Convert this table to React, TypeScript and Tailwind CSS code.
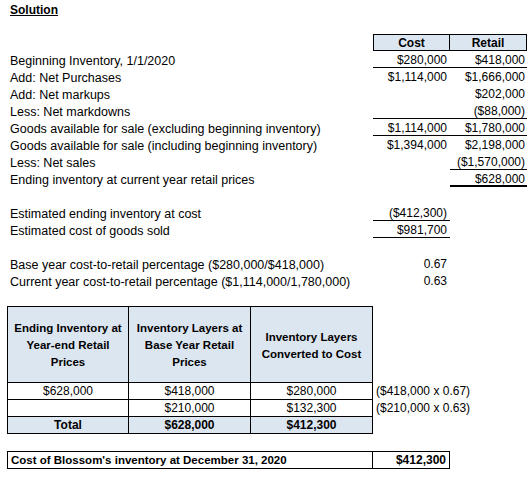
const font = { fontFamily: '"Liberation Sans", Arial, sans-serif' };

type Row = {
  label?: string;
  cost?: string;
  retail?: string;
  costLine?: boolean;
  retailLine?: boolean;
  retailThick?: boolean;
};

const rows: Row[] = [
  { label: "Beginning Inventory, 1/1/2020", cost: "$280,000", retail: "$418,000", costLine: true, retailLine: true },
  { label: "Add: Net Purchases", cost: "$1,114,000", retail: "$1,666,000" },
  { label: "Add: Net markups", retail: "$202,000" },
  { label: "Less: Net markdowns", retail: "($88,000)", costLine: true, retailLine: true },
  { label: "Goods available for sale (excluding beginning inventory)", cost: "$1,114,000", retail: "$1,780,000", costLine: true, retailLine: true },
  { label: "Goods available for sale (including beginning inventory)", cost: "$1,394,000", retail: "$2,198,000" },
  { label: "Less: Net sales", retail: "($1,570,000)", retailLine: true },
  { label: "Ending inventory at current year retail prices", retail: "$628,000", retailThick: true },
  {},
  { label: "Estimated ending inventory at cost", cost: "($412,300)", costLine: true },
  { label: "Estimated cost of goods sold", cost: "$981,700", costLine: true },
  {},
  { label: "Base year cost-to-retail percentage ($280,000/$418,000)", cost: "0.67" },
  { label: "Current year cost-to-retail percentage ($1,114,000/1,780,000)", cost: "0.63" },
  {},
];

const layers = [
  { a: "$628,000", b: "$418,000", c: "$280,000", note: "($418,000 x 0.67)" },
  { a: "", b: "$210,000", c: "$132,300", note: "($210,000 x 0.63)" },
];

export default function App() {
  return (
    <div className="w-[528px] h-[486px] bg-white text-black text-[12px]" style={font}>
      <div className="h-[17px] pl-[10px] pt-[3px] leading-[15px] font-bold underline">Solution</div>
      <div className="h-[17px]" />
      <div className="flex h-[17px]">
        <div className="w-[373px]" />
        <div className="w-[77px] border border-black bg-[#dce6f1] text-center font-bold pt-[1px] leading-[14px]">Cost</div>
        <div className="w-[77px] border-y border-r border-black bg-[#dce6f1] text-center font-bold pt-[1px] leading-[14px]">Retail</div>
      </div>
      {rows.map((r, i) => (
        <div key={i} className="flex h-[17px] leading-[15px]">
          <div className="w-[373px] pl-[10px] pt-[3px] text-[12.5px] whitespace-nowrap">{r.label}</div>
          <div className={`w-[77px] text-right pr-[3px] pt-[2px] ${r.costLine ? "border-b border-black" : ""}`}>{r.cost}</div>
          <div
            className={`w-[77px] text-right pr-[2px] pt-[2px] ${r.retailLine ? "border-b border-black" : ""} ${r.retailThick ? "border-b-2 border-black" : ""}`}
          >
            {r.retail}
          </div>
        </div>
      ))}

      <div className="pl-[7px]">
        <div className="flex">
          {[
            ["Ending Inventory at", "Year-end Retail", "Prices"],
            ["Inventory Layers at", "Base Year Retail", "Prices"],
            ["Inventory Layers", "Converted to Cost"],
          ].map((lines, i) => (
            <div
              key={i}
              className={`w-[122px] h-[77px] pt-[2px] border-t border-r border-b border-black bg-[#dce6f1] font-bold text-[11.5px] flex flex-col justify-center items-center leading-[17px] whitespace-nowrap ${i === 0 ? "border-l" : ""}`}
            >
              {lines.map((l) => (
                <span key={l}>{l}</span>
              ))}
            </div>
          ))}
        </div>
        {layers.map((r, i) => (
          <div key={i} className="flex h-[17px] leading-[15px]">
            <div className="w-[122px] border-l border-r border-b border-black text-center pt-[1px]">{r.a}</div>
            <div className="w-[122px] border-r border-b border-black text-center pt-[1px]">{r.b}</div>
            <div className="w-[122px] border-r border-b border-black text-center pt-[1px]">{r.c}</div>
            <div className="pl-[3px] pt-[1px] whitespace-nowrap">{r.note}</div>
          </div>
        ))}
        <div className="flex h-[17px] leading-[15px] font-bold">
          <div className="w-[122px] border-l border-r border-b border-black bg-[#dce6f1] text-center pt-[1px]">Total</div>
          <div className="w-[122px] border-r border-b border-black bg-[#dce6f1] text-center pt-[1px]">$628,000</div>
          <div className="w-[122px] border-r border-b border-black bg-[#dce6f1] text-center pt-[1px]">$412,300</div>
        </div>
        <div className="h-[17px]" />
        <div className="flex h-[18px] leading-[15px] font-bold text-[11.5px]">
          <div className="w-[366px] border border-black pl-[3px] pt-[1px] whitespace-nowrap">
            Cost of Blossom's inventory at December 31, 2020
          </div>
          <div className="w-[77px] border-y border-r border-black text-right pr-[3px] pt-[1px] text-[12px]">$412,300</div>
        </div>
      </div>
    </div>
  );
}
